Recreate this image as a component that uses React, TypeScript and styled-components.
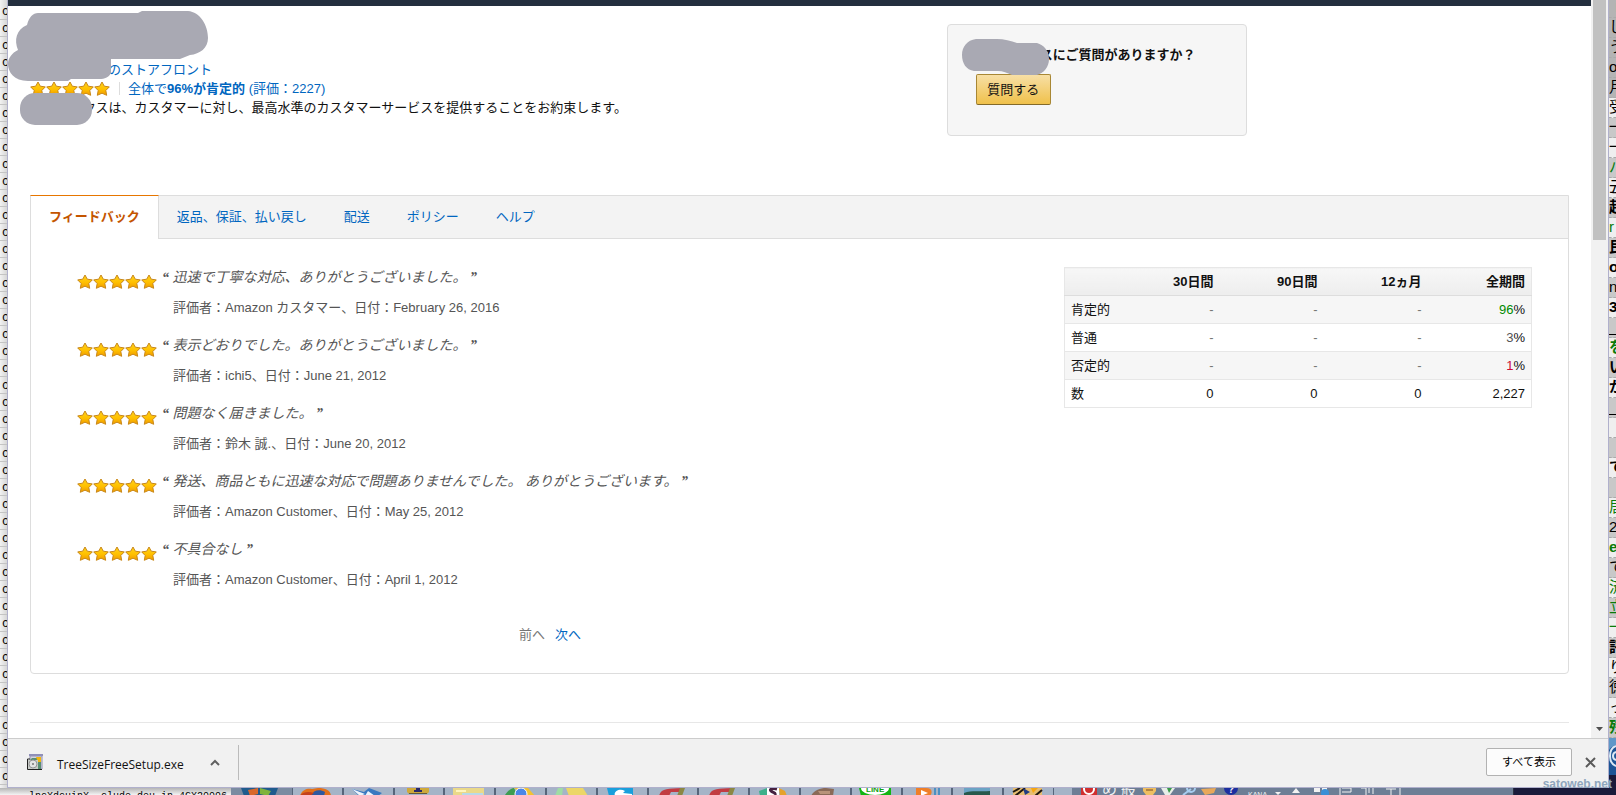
import React from "react";
import styled, { createGlobalStyle, css } from "styled-components";

const sans = `"Liberation Sans", "Noto Sans CJK JP", sans-serif`;
const link = "#0066c0";
const line = "#dddddd";
const mask = "#a9a9b3";

const Global = createGlobalStyle`
  * { box-sizing: border-box; }
  html, body, #root { height: 100%; }
  body { margin: 0; overflow: hidden; background: #ffffff; }
  body, button { font-family: ${sans}; font-size: 13px; line-height: 19px; color: #111111; }
  button { margin: 0; padding: 0; border: 0; background: none; }
  h2, p, ul, ol, blockquote { margin: 0; padding: 0; list-style: none; }
  a { color: ${link}; text-decoration: none; }
`;

/* ---------- desktop around the window ---------- */

const Desktop = styled.div`
  display: grid;
  grid-template-columns: 7px minmax(0, 1fr) 7px;
  grid-template-rows: minmax(0, 1fr) 7px;
  height: 100vh;
  overflow: hidden;
`;

const LeftStrip = styled.div`
  overflow: hidden;
  padding-top: 3px;
  background: linear-gradient(to right, #f2f2f2, #d6d6d6);
`;

const LeftRow = styled.div`
  height: 17px;
  padding-left: 2px;
  overflow: hidden;
  border-bottom: 1px solid #c4c4c4;
  font: 12px/18px "Liberation Mono", monospace;
  color: #000000;
`;

const RightStrip = styled.div`
  grid-column: 3;
  grid-row: 1 / 3;
  display: flex;
  flex-direction: column;
  overflow: hidden;
  background: #1a1a3a;
`;

const RightRow = styled.div<{ $shade: string; $ink?: string; $bold?: boolean }>`
  flex: none;
  height: 20px;
  overflow: hidden;
  border-bottom: 1px dashed #aaaaaa;
  background: ${(p) => p.$shade};
  color: ${(p) => p.$ink || "#000000"};
  font: ${(p) => (p.$bold ? 700 : 400)} 15px/18px "Liberation Sans", "Noto Sans CJK JP", sans-serif;
  white-space: nowrap;
  &:first-child { height: 18px; }
`;

const OrbTile = styled.svg`
  flex: none;
  display: block;
  width: 7px;
  height: 37px;
`;

/* ---------- browser window ---------- */

const Window = styled.div`
  display: flex;
  flex-direction: column;
  min-width: 0;
  border: solid #b0b0cc;
  border-width: 0 1px 1px;
  background: #ffffff;
`;

const Viewport = styled.div`
  flex: 1;
  display: flex;
  min-height: 0;
`;

const Page = styled.main`
  flex: 1;
  min-width: 0;
  overflow: hidden;
  border-top: 6px solid #232f3e;
  padding: 18px 22px 0;
`;

const ScrollTrack = styled.div`
  flex: none;
  display: flex;
  flex-direction: column;
  justify-content: space-between;
  align-items: center;
  width: 17px;
  padding-bottom: 7px;
  background: #f1f1f1;
`;

const ScrollThumb = styled.div`
  width: 13px;
  height: 240px;
  background: #c1c1c1;
`;

const Header = styled.header`
  display: grid;
  grid-template-columns: 74fr 300px 26fr;
  margin-bottom: 59px;
`;

const Seller = styled.div`
  position: relative;
  padding-top: 36px;
`;

const SellerLine = styled.div<{ $indent?: number }>`
  display: flex;
  align-items: center;
  height: 19px;
  padding-left: ${(p) => p.$indent || 0}px;
  white-space: nowrap;
`;

const Rating = styled.a`
  padding-left: 8px;
  white-space: pre;
`;

const Rule = styled.span`
  width: 1px;
  height: 13px;
  margin-left: 9px;
  background: ${line};
`;

const SellerMask = styled.svg`
  position: absolute;
  top: -14px;
  left: -22px;
`;

const AskCard = styled.section`
  position: relative;
  height: 112px;
  padding: 20px 28px;
  border: 1px solid ${line};
  border-radius: 4px;
  background: #f6f6f6;
`;

const AskTitle = styled.h2`
  padding-left: 64px;
  font-size: 13px;
  line-height: 19px;
  white-space: nowrap;
`;

const AskMask = styled.svg`
  position: absolute;
  top: 14px;
  left: 14px;
`;

const AskButton = styled.button`
  width: 75px;
  height: 31px;
  margin-top: 10px;
  border: 1px solid #a88734;
  border-bottom-color: #846a29;
  border-radius: 2px;
  background: linear-gradient(#f7dfa5, #f0c14b);
`;

const TabBox = styled.section`
  border: 1px solid ${line};
  border-radius: 0 0 4px 4px;
`;

const TabBar = styled.nav`
  display: flex;
  height: 43px;
  border-bottom: 1px solid ${line};
  background: #f3f3f3;
`;

const Tab = styled.a<{ $active?: boolean }>`
  padding: 0 18px;
  border-right: 1px solid transparent;
  line-height: 42px;
  ${(p) =>
    p.$active &&
    css`
      margin: -1px 0 -1px -1px;
      border: solid ${line};
      border-width: 1px 1px 0;
      border-top-color: #e77600;
      background: #ffffff;
      color: #c45500;
      font-weight: 700;
    `}
`;

const Panel = styled.div`
  display: grid;
  grid-template-columns: minmax(0, 1fr) 468px;
  column-gap: 41px;
  align-items: start;
  padding: 28px 36px 28px 46px;
`;

const Reviews = styled.ul`
  display: grid;
  row-gap: 17px;
`;

const Review = styled.li`
  display: grid;
  grid-template-columns: 80px minmax(0, 1fr);
  column-gap: 5px;
`;

const ReviewStars = styled.div`
  padding-top: 7px;
`;

const ReviewText = styled.div`
  padding-top: 1px;
`;

const Quote = styled.blockquote`
  font: italic 14px/20px "Liberation Serif", "Noto Sans CJK JP", serif;
  color: #555555;
  white-space: pre;
`;

const Mark = styled.span`
  font-weight: 700;
`;

const Byline = styled.p`
  margin-top: 10px;
  padding-left: 11px;
  line-height: 20px;
  color: #555555;
`;

const Pager = styled.nav`
  display: flex;
  justify-content: center;
  gap: 10px;
  margin-top: 35px;
  line-height: 20px;
  color: #767676;
`;

const Stats = styled.table`
  width: 100%;
  table-layout: fixed;
  border: 1px solid #e7e7e7;
  border-collapse: collapse;
  th, td {
    height: 28px;
    padding: 0 6px;
    border-bottom: 1px solid #e7e7e7;
    text-align: right;
    line-height: 19px;
    white-space: nowrap;
  }
  thead th {
    border-bottom-color: ${line};
    background: linear-gradient(#f7f7f7, #ededed);
  }
  tbody th { font-weight: 400; }
  th:first-child { text-align: left; }
  tbody tr:nth-child(odd) { background: #f6f6f6; }
`;

const ValueHead = styled.th`
  width: 104px;
`;

const Ink = styled.span<{ $color: string }>`
  color: ${(p) => p.$color};
`;

const Divider = styled.hr`
  height: 1px;
  margin: 48px 0 0;
  border: 0;
  background: #e7e7e7;
`;

const Downloads = styled.footer`
  flex: none;
  display: flex;
  align-items: center;
  height: 49px;
  padding: 0 12px 2px 19px;
  border-top: 1px solid #cccccc;
  background: #f1f1f1;
`;

const DownloadItem = styled.button`
  display: flex;
  align-items: center;
  height: 35px;
  padding-right: 18px;
  border-right: 1px solid #bbbbbb;
`;

const FileName = styled.span`
  margin: 6px 26px 0 13px;
  font: 12px/20px "Open Sans", "Noto Sans", sans-serif;
`;

const ShowAll = styled.button`
  width: 86px;
  height: 28px;
  margin: 0 13px 0 auto;
  border: 1px solid #b2b2b2;
  border-radius: 2px;
  background: #fcfcfc;
  font-size: 11px;
  color: #000000;
`;

/* ---------- taskbar ---------- */

const Taskbar = styled.div`
  grid-column: 1 / 3;
  display: flex;
  height: 7px;
  overflow: hidden;
  background: #1a1a3a;
`;

const Console = styled.div`
  flex: none;
  width: 231px;
  padding: 2px 0 0 29px;
  overflow: hidden;
  background: linear-gradient(#b5b5b5, #f4f4f4);
  font: 10px/14px "Liberation Mono", monospace;
  color: #000000;
  white-space: nowrap;
`;

const StartSlot = styled.div`
  flex: none;
  width: 61px;
  padding-left: 10px;
  background: #7b8ba1;
`;

const TaskButtons = styled.div`
  flex: none;
  display: grid;
  grid-template-columns: repeat(15, 1fr);
  width: 762px;
`;

const TaskSlot = styled.div`
  height: 7px;
  padding-left: 7px;
  overflow: hidden;
  border: solid #56657a;
  border-width: 0 1px;
  background: #a5b4c7;
`;

const Tray = styled.div`
  flex: none;
  width: 460px;
  border-right: 1px solid #2a3040;
  background: linear-gradient(to right, #a5b4c7 18px, #6d7e95 18px);
`;

const Glyphs = styled.svg`
  display: block;
`;

const Watermark = styled.div`
  position: absolute;
  right: 4px;
  bottom: 4px;
  font: 700 12px/14px "Liberation Sans", sans-serif;
  color: #8fa6bd;
`;

/* ---------- data ---------- */

const reviews = [
  ["迅速で丁寧な対応、ありがとうございました。", "Amazon カスタマー", "February 26, 2016"],
  ["表示どおりでした。ありがとうございました。", "ichi5", "June 21, 2012"],
  ["問題なく届きました。", "鈴木 誠.", "June 20, 2012"],
  ["発送、商品ともに迅速な対応で問題ありませんでした。 ありがとうございます。", "Amazon Customer", "May 25, 2012"],
  ["不具合なし", "Amazon Customer", "April 1, 2012"],
];

const stats = [
  { label: "肯定的", value: "96", color: "#008a00" },
  { label: "普通", value: "3", color: "#555555" },
  { label: "否定的", value: "1", color: "#cc0c39" },
];

const green = "#0a7a0a";
const light = "#efefef";
const dark = "#c8c8c8";
const deep = "#b4b4b4";

const rightRows: [string, string, string?, boolean?][] = [
  ["刂", deep], ["し", deep], ["う", deep], ["oo", deep], ["月", deep],
  ["受", light], ["一", dark], ["一", light], ["バ", dark, green], ["云", light],
  ["起", dark, "#000000", true], ["r", light, green], ["民", dark, "#000000", true],
  ["o", light, "#000000", true], ["n", dark], ["32", light, "#000000", true], ["_", dark],
  ["を", light, green, true], ["い", dark, "#000000", true], ["が", light, "#000000", true],
  ["_", dark], ["", light], ["", dark], ["て", light, "#000000", true], ["", dark],
  ["居", light, green], ["2", dark], ["e", light, green, true], ["て", dark],
  ["済", light, green], ["立", dark, green], ["一", light, green], ["評", dark, "#000000", true],
  ["り", light], ["徳", dark], ["っ", light], ["残", dark, green, true],
];

const starPath = "M8 1 10.3 5.2 15.3 5.9 11.8 9.5 12.7 14.3 8 12.2 3.3 14.3 4.2 9.5 .7 5.9 5.7 5.2Z";

function Stars() {
  return (
    <Glyphs width="80" height="15" viewBox="0 0 80 15" role="img" aria-label="5つ星のうち5">
      <defs>
        <linearGradient id="gold" x1="0" y1="0" x2="0" y2="1">
          <stop offset="0" stopColor="#ffd21a" />
          <stop offset="0.55" stopColor="#ffc000" />
          <stop offset="1" stopColor="#f09a00" />
        </linearGradient>
      </defs>
      {[0, 1, 2, 3, 4].map((i) => (
        <path key={i} d={starPath} transform={`translate(${i * 16})`} fill="url(#gold)" stroke="#c8881a" strokeLinejoin="round" />
      ))}
    </Glyphs>
  );
}

const taskIcons: React.ReactNode[] = [
  <><path d="M0 8C2 1 8 0 12 1L18 0C26 0 31 3 31 8Z" fill="#e2701a" /><path d="M11 8C12 3 19 0 25 4L24 8Z" fill="#2d58a0" /><path d="M0 8C2 4 8 3 14 5L10 8Z" fill="#c4401c" /></>,
  <><path d="M1 1 13 4 18 0 31 5 27 8H8Z" fill="#3a78c0" /><path d="M1 1 14 6 9 8ZM17 3 24 8H14Z" fill="#eef3fa" /></>,
  <><path d="M5 0H27V4L25 6H7L5 4Z" fill="#cfa93a" /><path d="M14 0H18V2H20V4H12V2H14Z" fill="#2a2a68" /><path d="M7 5H25V6H7Z" fill="#655b38" /></>,
  <><path d="M1 0H32V8H1Z" fill="#ead98a" /><path d="M4 2H14V4H4Z" fill="#fff5bd" /><path d="M10 5H31V8H10Z" fill="#b9d9e8" /></>,
  <><path d="M2 7C5 3 8 0 11 0L15 8Z" fill="#3d9d51" /><path d="M11 0H25L32 8H22Z" fill="#f1c232" /><circle cx="18" cy="6" r="6" fill="#4a87e8" stroke="#ffffff" /></>,
  <><path d="M4 0H9L8 8H1Z" fill="#9fdca4" /><path d="M12 0H29L34 8H15Z" fill="#ecd667" /></>,
  <><path d="M2 0H28V8H4Z" fill="#199fdc" /><path d="M10 8C8 3 15 0 20 3L18 5L27 6V8Z" fill="#ffffff" /></>,
  <><path d="M3 8C5 0 12 1 26 0V4H15L13 8Z" fill="#c23c42" /><path d="M24 0H29L26 8H21Z" fill="#8c8744" /></>,
  <><path d="M3 8C5 0 12 1 26 0V4H15L13 8Z" fill="#c23c42" /><path d="M24 0H29L26 8H21Z" fill="#8c8744" /></>,
  <><path d="M2 3 10 0V8H3Z" fill="#3eb08a" /><path d="M10 0H22V8H10Z" fill="#ffffff" /><path d="M20 1C16 0 12 1 14 3S19 4 18 7" fill="none" stroke="#46203f" strokeWidth="3" /><path d="M22 0 28 3 30 8H23Z" fill="#e5a22d" /></>,
  <><path d="M3 8C5 3 12 0 18 0L26 1 25 8Z" fill="#8a6a58" /><path d="M10 3H22V6H12Z" fill="#b9937a" /></>,
  <><path d="M0 0H32V8H2Z" fill="#12b512" /><ellipse cx="16" cy="0" rx="14" ry="7" fill="#ffffff" /><text x="7" y="4" fontSize="8" fontWeight="700" fontFamily="Liberation Sans, sans-serif" fill="#12a012">LINE</text></>,
  <><path d="M6 0H16C22 0 23 4 20 8H6Z" fill="#ef7f29" /><path d="M11 2 18 5 11 8Z" fill="#ffffff" /><path d="M25 0V8M29 0V8" stroke="#4d8fc2" strokeWidth="2" /></>,
  <><path d="M4 0H30V8H4Z" fill="#6ba3c5" /><path d="M4 5C12 2 20 4 30 3V8H4Z" fill="#28594c" /></>,
  <><path d="M2 0H31V8H2Z" fill="#e6bd72" /><path d="M2 4 9 0M4 8 14 0M24 8 31 2" stroke="#201810" strokeWidth="2" /><path d="M12 0 19 4 14 7Z" fill="#203c82" /><path d="M20 0H27L22 5Z" fill="#f6a613" /></>,
];

export default function App() {
  return (
    <>
      <Global />
      <Desktop>
        <LeftStrip>
          {Array.from({ length: 46 }, (_, i) => (
            <LeftRow key={i}>c</LeftRow>
          ))}
        </LeftStrip>

        <Window>
          <Viewport>
            <Page>
              <Header>
                <Seller>
                  <SellerLine $indent={78}>
                    <a href="#storefront">のストアフロント</a>
                  </SellerLine>
                  <SellerLine>
                    <Stars />
                    <Rule />
                    <Rating href="#ratings">
                      全体で<b>96%が肯定的</b> (評価：2227)
                    </Rating>
                  </SellerLine>
                  <SellerLine $indent={53}>
                    クスは、カスタマーに対し、最高水準のカスタマーサービスを提供することをお約束します。
                  </SellerLine>
                  <SellerMask width="202" height="118" viewBox="8 10 202 118" fill={mask} aria-hidden="true">
                    <path d="M38 13H138L142 11H188C200 12 208 25 208 38 208 48 200 54 190 55L180 59H111V73C108 79 102 79 98 79H71L68 81H28C14 81 8 72 8 64 8 58 12 53 18 50 14 40 16 30 27 25 29 17 33 13 38 13Z" />
                    <rect x="20" y="93" width="72" height="32" rx="15" />
                  </SellerMask>
                </Seller>
                <AskCard>
                  <AskTitle>スにご質問がありますか？</AskTitle>
                  <AskButton type="button">質問する</AskButton>
                  <AskMask width="88" height="37" viewBox="0 0 88 37" fill={mask} aria-hidden="true">
                    <path d="M14 0H35C42 0 49 2 55 4H75C82 6 87 12 87 20 87 28 82 34 75 36H50C45 34 41 32 36 32H12C4 31 0 24 0 16 0 8 5 1 14 0Z" />
                  </AskMask>
                </AskCard>
              </Header>

              <TabBox>
                <TabBar>
                  <Tab href="#feedback" $active>フィードバック</Tab>
                  <Tab href="#returns">返品、保証、払い戻し</Tab>
                  <Tab href="#shipping">配送</Tab>
                  <Tab href="#policies">ポリシー</Tab>
                  <Tab href="#help">ヘルプ</Tab>
                </TabBar>
                <Panel>
                  <div>
                    <Reviews>
                      {reviews.map(([text, who, date]) => (
                        <Review key={date}>
                          <ReviewStars>
                            <Stars />
                          </ReviewStars>
                          <ReviewText>
                            <Quote>
                              <Mark>“</Mark>
                              {` ${text} `}
                              <Mark>”</Mark>
                            </Quote>
                            <Byline>{`評価者：${who}、日付：${date}`}</Byline>
                          </ReviewText>
                        </Review>
                      ))}
                    </Reviews>
                    <Pager>
                      <span>前へ</span>
                      <a href="#next">次へ</a>
                    </Pager>
                  </div>
                  <Stats>
                    <thead>
                      <tr>
                        <th />
                        <ValueHead scope="col">30日間</ValueHead>
                        <ValueHead scope="col">90日間</ValueHead>
                        <ValueHead scope="col">12ヵ月</ValueHead>
                        <ValueHead scope="col">全期間</ValueHead>
                      </tr>
                    </thead>
                    <tbody>
                      {stats.map((row) => (
                        <tr key={row.label}>
                          <th scope="row">{row.label}</th>
                          {[0, 1, 2].map((i) => (
                            <td key={i}><Ink $color="#767676">-</Ink></td>
                          ))}
                          <td><Ink $color={row.color}>{row.value}</Ink>%</td>
                        </tr>
                      ))}
                      <tr>
                        <th scope="row">数</th>
                        <td>0</td>
                        <td>0</td>
                        <td>0</td>
                        <td>2,227</td>
                      </tr>
                    </tbody>
                  </Stats>
                </Panel>
              </TabBox>
              <Divider />
            </Page>
            <ScrollTrack>
              <ScrollThumb />
              <Glyphs width="7" height="4" viewBox="0 0 7 4" aria-hidden="true">
                <path d="M0 0H7L3.5 4Z" fill="#505050" />
              </Glyphs>
            </ScrollTrack>
          </Viewport>

          <Downloads>
            <DownloadItem type="button">
              <Glyphs width="17" height="17" viewBox="0 0 17 17" aria-hidden="true">
                <path d="M2 0H16V2H2Z" fill="#8f8fb8" />
                <path d="M3 2H15V15H3Z" fill="#d5d5e2" stroke="#9292b4" />
                <path d="M5 4H14V15H3V6Z" fill="#5b8f72" />
                <path d="M9 3H14V8H11Z" fill="#f2b70e" />
                <path d="M3 5H0.500V15.500H15" fill="none" stroke="#222222" />
                <rect x="1" y="6" width="10" height="9" fill="#c9cdc9" />
                <circle cx="6" cy="10" r="4" fill="#e4e4e4" stroke="#969696" />
                <circle cx="6" cy="10" r="1" fill="#777777" />
              </Glyphs>
              <FileName>TreeSizeFreeSetup.exe</FileName>
              <Glyphs width="10" height="7" viewBox="0 0 10 7" aria-hidden="true">
                <path d="M1 6 5 2 9 6" fill="none" stroke="#606060" strokeWidth="2" />
              </Glyphs>
            </DownloadItem>
            <ShowAll type="button">すべて表示</ShowAll>
            <button type="button" aria-label="閉じる">
              <Glyphs width="11" height="11" viewBox="0 0 11 11">
                <path d="M1 1 10 10M10 1 1 10" stroke="#5a5a5a" strokeWidth="2" />
              </Glyphs>
            </button>
          </Downloads>
        </Window>

        <RightStrip>
          {rightRows.map(([text, shade, ink, bold], i) => (
            <RightRow key={i} $shade={shade} $ink={ink} $bold={bold}>{text}</RightRow>
          ))}
          <OrbTile viewBox="0 0 7 37" aria-hidden="true">
            <path d="M0 0H7V37H0Z" fill="#1d5596" />
            <path d="M0 0H7V7C4 8 2 9 0 12Z" fill="#5f97c8" />
            <path d="M7 8C-1 11-1 25 7 28M7 14C3 15 3 21 7 22" fill="none" stroke="#dce9f5" strokeWidth="2" />
          </OrbTile>
        </RightStrip>

        <Taskbar>
          <Console>lncXdcuinX__clude_deu_in_4GX20096</Console>
          <StartSlot>
            <Glyphs width="37" height="8" viewBox="0 0 37 8" aria-hidden="true">
              <path d="M0 0H37L34 8H3Z" fill="#1f5b8d" />
              <path d="M7 2 17 0V6L9 8Z" fill="#d9682c" />
              <path d="M19 0 30 3 27 8 19 6Z" fill="#7fb33d" />
            </Glyphs>
          </StartSlot>
          <TaskButtons>
            {taskIcons.map((icon, i) => (
              <TaskSlot key={i}>
                <Glyphs width="36" height="8" viewBox="0 0 36 8" aria-hidden="true">{icon}</Glyphs>
              </TaskSlot>
            ))}
          </TaskButtons>
          <Tray>
            <Glyphs width="459" height="7" viewBox="0 0 459 7" fontFamily="Liberation Sans, Noto Sans CJK JP, sans-serif" fill="#f2f2f2">
              <path d="M27 0H43V7H27Z" fill="#d12f2f" />
              <circle cx="35" cy="1" r="5" fill="none" stroke="#ffffff" strokeWidth="2" />
              <text x="48" y="6" fontSize="15">め</text>
              <text x="67" y="7" fontSize="15">般</text>
              <path d="M89 0H102V3L99 7H92L89 3Z" fill="#efbf62" />
              <path d="M92 2H99" stroke="#7a4a20" />
              <path d="M107 0H121L116 7H111Z" fill="#e8eee8" />
              <path d="M113 0H118L115 5Z" fill="#3a9a4a" />
              <path d="M129 7 137 1M133 0A4 4 0 1 0 141 0" fill="none" stroke="#a8cdf0" strokeWidth="2" />
              <path d="M147 1 162 0 160 5 151 7Z" fill="#e8a85a" />
              <circle cx="177" cy="0" r="7" fill="#1c2fa0" />
              <text x="174" y="5" fontSize="10" fontWeight="700">?</text>
              <text x="194" y="9" fontSize="7">KANA</text>
              <path d="M221 4H227L224 7ZM238 5H246L242 0Z" />
              <path d="M260 0H266V4H260ZM268 0H273V3H268Z" />
              <circle cx="271" cy="5" r="4" fill="#3a8fd6" />
              <path d="M286 0V7M288 0H297V4H288" fill="none" stroke="#f2f2f2" strokeWidth="1" />
              <path d="M307 0H312V7M315 0V5M319 0V6" fill="none" stroke="#f2f2f2" strokeWidth="1" />
              <path d="M332 1H342M337 1V7M346 0V7" fill="none" stroke="#f2f2f2" strokeWidth="1" />
            </Glyphs>
          </Tray>
        </Taskbar>
      </Desktop>
      <Watermark>satoweb.net</Watermark>
    </>
  );
}
